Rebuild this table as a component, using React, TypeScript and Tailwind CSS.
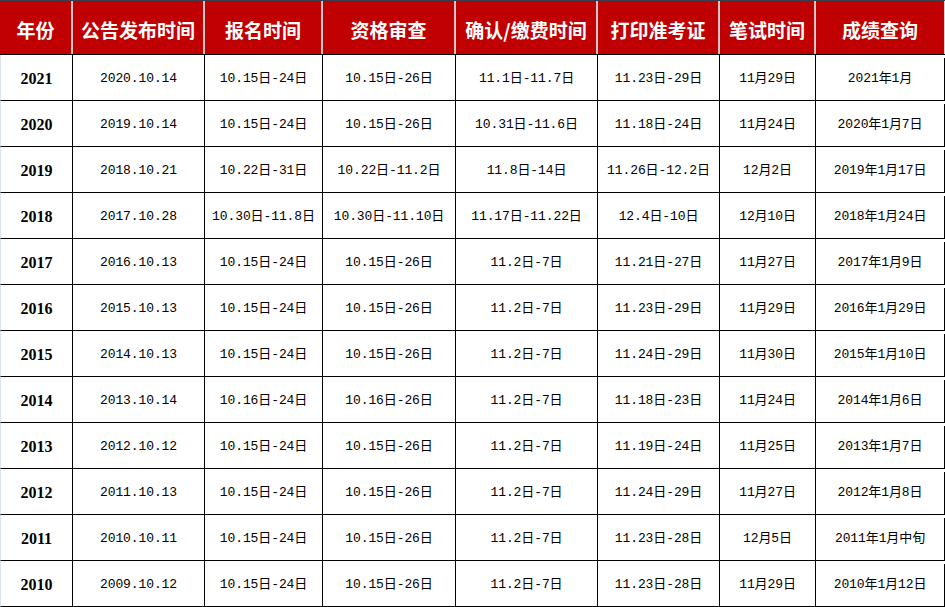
const headers = ['年份', '公告发布时间', '报名时间', '资格审查', '确认/缴费时间', '打印准考证', '笔试时间', '成绩查询'];

const rows: string[][] = [
  ['2021', '2020.10.14', '10.15日-24日', '10.15日-26日', '11.1日-11.7日', '11.23日-29日', '11月29日', '2021年1月'],
  ['2020', '2019.10.14', '10.15日-24日', '10.15日-26日', '10.31日-11.6日', '11.18日-24日', '11月24日', '2020年1月7日'],
  ['2019', '2018.10.21', '10.22日-31日', '10.22日-11.2日', '11.8日-14日', '11.26日-12.2日', '12月2日', '2019年1月17日'],
  ['2018', '2017.10.28', '10.30日-11.8日', '10.30日-11.10日', '11.17日-11.22日', '12.4日-10日', '12月10日', '2018年1月24日'],
  ['2017', '2016.10.13', '10.15日-24日', '10.15日-26日', '11.2日-7日', '11.21日-27日', '11月27日', '2017年1月9日'],
  ['2016', '2015.10.13', '10.15日-24日', '10.15日-26日', '11.2日-7日', '11.23日-29日', '11月29日', '2016年1月29日'],
  ['2015', '2014.10.13', '10.15日-24日', '10.15日-26日', '11.2日-7日', '11.24日-29日', '11月30日', '2015年1月10日'],
  ['2014', '2013.10.14', '10.16日-24日', '10.16日-26日', '11.2日-7日', '11.18日-23日', '11月24日', '2014年1月6日'],
  ['2013', '2012.10.12', '10.15日-24日', '10.15日-26日', '11.2日-7日', '11.19日-24日', '11月25日', '2013年1月7日'],
  ['2012', '2011.10.13', '10.15日-24日', '10.15日-26日', '11.2日-7日', '11.24日-29日', '11月27日', '2012年1月8日'],
  ['2011', '2010.10.11', '10.15日-24日', '10.15日-26日', '11.2日-7日', '11.23日-28日', '12月5日', '2011年1月中旬'],
  ['2010', '2009.10.12', '10.15日-24日', '10.15日-26日', '11.2日-7日', '11.23日-28日', '11月29日', '2010年1月12日'],
];

const App = () => {
  return (
    <div className="w-[945px] h-[607px] bg-white overflow-hidden">
      {/* Header */}
      <div className="h-[55px] flex border-t border-b border-t-[#3a3f4a] border-b-black bg-[#d4d4d4]">
        <div className="grid grid-cols-[73px_132px_118px_133px_142px_122px_96px_128px] bg-[#c00000]">
          {headers.map((h) => (
            <div
              key={h}
              className="flex items-center justify-center pt-[5px] border-r-2 border-[#c8c8c8] last:border-r-0 text-white text-[19px] font-bold text-center whitespace-nowrap"
              style={{ fontFamily: '"Noto Sans CJK SC", sans-serif' }}
            >
              {h}
            </div>
          ))}
        </div>
      </div>

      {/* Body */}
      {rows.map((r) => (
        <div
          key={r[0]}
          className="h-[46px] grid grid-cols-[72px_132px_118px_133px_142px_122px_96px_129px] border-l border-b border-l-[#dce3f0] border-b-black"
        >
          {r.map((c, i) => (
            <div
              key={i}
              className={
                i === 0
                  ? 'flex items-center justify-center pt-[3px] border-r border-black text-[16px] font-bold text-black font-["Liberation_Serif",serif]'
                  : 'flex items-center justify-center pt-[3px] border-r border-black text-[13px] text-black whitespace-nowrap tracking-[-0.1px] font-["Liberation_Mono","Noto_Sans_CJK_SC",monospace] last:border-r-0'
              }
            >
              {i === 7 ? <span className="border-r border-black h-full flex items-center justify-center w-full">{c}</span> : c}
            </div>
          ))}
        </div>
      ))}
    </div>
  );
};

export default App;
